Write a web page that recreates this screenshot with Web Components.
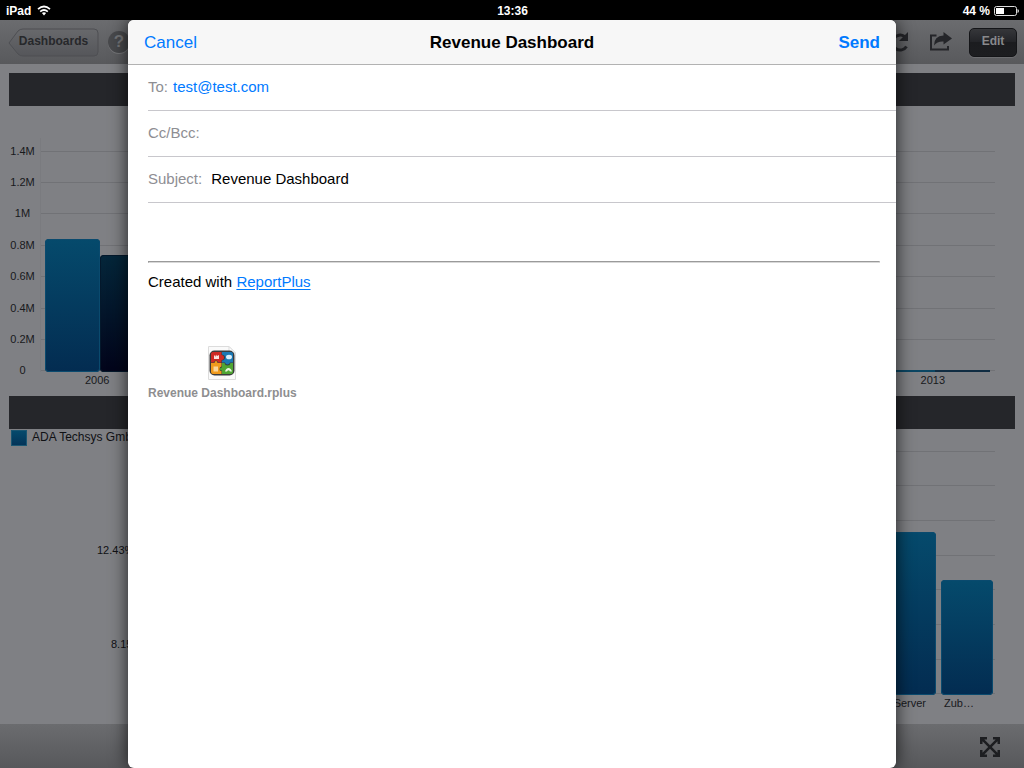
<!DOCTYPE html>
<html lang="en">
<head>
<meta charset="utf-8">
<meta name="viewport" content="width=device-width, initial-scale=1">
<title>Revenue Dashboard</title>
<style>
html, body {
    height: 100%;
    margin: 0;
}
body {
    font-family: "Liberation Sans", Arial, sans-serif;
    overflow: hidden;
}
</style>
</head>
<body>
<site-body></site-body>

<script>
class BaseElement extends HTMLElement{
    constructor(){
        super();
        this.attachShadow({mode:'open'});
    }

    connectedCallback(){
        this.render()
    }

    render(){
        this.shadowRoot.innerHTML = this.getTemplate() + this.getStyle()
    }
}

class StatusBar extends BaseElement{
    getTemplate(){
        return `
        <div class="side">
            <span>iPad</span>
            <svg width="14" height="11" viewBox="0 0 14 11" fill="none" stroke="#fff" stroke-width="1.7">
                <path d="M1 4.2Q7-1.2 13 4.2M3.2 6.6Q7 3.4 10.8 6.6"/>
                <path d="M4.9 7.9Q7 6.4 9.1 7.9L7 10.4Z" fill="#fff" stroke="none"/>
            </svg>
        </div>
        <time>13:36</time>
        <div class="side end">
            <span>44 %</span>
            <svg width="25" height="10" viewBox="0 0 25 10">
                <rect x=".5" y=".5" width="22" height="9" rx="2" fill="none" stroke="#ddd"/>
                <rect x="2" y="2" width="8" height="6" fill="#fff"/>
                <path d="M23.5 3Q25 3.5 25 5T23.5 7Z" fill="#ddd"/>
            </svg>
        </div>
        `
    }

    getStyle(){
        return `
        <style>
        :host{
            display: flex;
            align-items: center;
            height: 20px;
            padding: 1px 5px 0 6px;
            box-sizing: border-box;
            background: #000;
            color: #fff;
            font-size: 12px;
            font-weight: bold;
        }
        .side{
            display: flex;
            flex: 1;
            align-items: center;
            gap: 6px;
        }
        .end{
            justify-content: flex-end;
            gap: 4px;
        }
        </style>
        `
    }
}

class DashboardToolbar extends BaseElement{
    getTemplate(){
        return `
        <button class="back" type="button">
            <svg width="91" height="29" viewBox="0 0 91 29">
                <defs>
                    <linearGradient id="g" x2="0" y2="1">
                        <stop offset="0" stop-color="#68696c"/>
                        <stop offset="1" stop-color="#55565a"/>
                    </linearGradient>
                </defs>
                <path d="M1 15L10 3Q12 1 15 1H86Q90 1 90 5V24Q90 28 86 28H15Q12 28 10 26Z" fill="url(#g)" stroke="#4e4f53"/>
            </svg>
            <span>Dashboards</span>
        </button>
        <button class="help" type="button" aria-label="Help">?</button>
        <div class="space"></div>
        <button class="icon" type="button" aria-label="Refresh">
            <svg width="22" height="22" viewBox="0 0 22 22">
                <path d="M17.500 15.500A7.500 7.500 0 1 1 15.500 5.500" fill="none" stroke="#242529" stroke-width="3"/>
                <path d="M19 1V10H10Z" fill="#242529"/>
            </svg>
        </button>
        <button class="icon" type="button" aria-label="Share">
            <svg width="24" height="22" viewBox="0 0 24 22">
                <path d="M8.500 4.500H3V18.500H20V15" fill="none" stroke="#242529" stroke-width="2"/>
                <path d="M6 14.500Q6 5 15.500 4.500V1L24 7.500L15.500 13.500V10.500Q9.500 10 6 14.500Z" fill="#242529"/>
            </svg>
        </button>
        <button class="edit" type="button">Edit</button>
        `
    }

    getStyle(){
        return `
        <style>
        :host{
            display: flex;
            align-items: center;
            height: 44px;
            padding: 0 7px 0 8px;
            box-sizing: border-box;
            background: linear-gradient(#6b6c6f, #58595c);
        }
        button{
            padding: 0;
            border: 0;
            background: none;
            font: bold 12px "Liberation Sans", Arial, sans-serif;
            color: #27282b;
        }
        .back{
            display: grid;
            align-items: center;
        }
        .back > *{
            grid-area: 1 / 1;
        }
        .back span{
            padding-bottom: 2px;
        }
        .help{
            width: 22px;
            height: 22px;
            margin-left: 9px;
            border-radius: 50%;
            background: #48494c;
            box-shadow: 0 1px 0 #77787b;
            color: #747578;
            font-size: 17px;
            line-height: 22px;
        }
        .space{
            flex: 1;
        }
        .icon{
            display: flex;
            margin-right: 17px;
        }
        .edit{
            width: 48px;
            height: 29px;
            padding-bottom: 2px;
            border: 1px solid #141518;
            border-radius: 5px;
            background: linear-gradient(#36373a, #222327 50%, #1b1c1f 50%, #1d1e21);
            box-shadow: 0 1px 0 #6c6d70;
            color: #88898c;
        }
        </style>
        `
    }
}

class DashboardPanel extends BaseElement{
    getTemplate(){
        return `
        <header></header>
        <div class="content"><slot></slot></div>
        `
    }

    getStyle(){
        return `
        <style>
        :host{
            display: flex;
            flex-direction: column;
            min-height: 0;
        }
        header{
            height: 33px;
            background: #25262a;
        }
        .content{
            display: flex;
            flex: 1;
            min-height: 0;
        }
        </style>
        `
    }
}

// ticks: axis labels from top to bottom, empty ones draw the line only
// groups: bar heights in percent of the plot, "," inside a group, "|" between groups
class BarChart extends BaseElement{
    getTemplate(){
        const ticks = this.getAttribute('ticks').split(',')
        const groups = this.getAttribute('groups').split('|')
        const labels = this.getAttribute('labels').split('|')

        return `
        <div class="plot">
            <div class="grid">
                ${ticks.map(t => `<div class="tick"><span>${t}</span><i></i></div>`).join('')}
            </div>
            <div class="bars">
                ${groups.map(g => `<div class="group">${g ? g.split(',').map(h => `<div class="bar" style="height:${h}%"></div>`).join('') : ''}</div>`).join('')}
            </div>
        </div>
        <div class="labels">
            ${labels.map(l => `<span>${l}</span>`).join('')}
        </div>
        `
    }

    getStyle(){
        return `
        <style>
        :host{
            display: flex;
            flex: 1;
            flex-direction: column;
            min-width: 0;
            padding: 38px 20px 9px 0;
            font-size: 11px;
            line-height: 14px;
            color: #18191c;
        }
        :host([compact]){
            padding-top: 15px;
        }
        .plot{
            display: grid;
            flex: 1;
            min-height: 0;
        }
        .grid, .bars{
            grid-area: 1 / 1;
            min-height: 0;
        }
        .grid{
            display: flex;
            flex-direction: column;
            justify-content: space-between;
        }
        .tick{
            display: flex;
            align-items: center;
            gap: 4px;
            height: 14px;
        }
        .tick span{
            width: 27px;
            padding-bottom: 1px;
            text-align: center;
        }
        .tick i{
            flex: 1;
            height: 1px;
            background: #717276;
        }
        .bars{
            display: flex;
            margin: -6px 0 6px 31px;
            padding-top: 13px;
            border-left: 1px solid #7a7b7f;
        }
        .group{
            display: flex;
            flex: 1;
            align-items: flex-end;
            padding: 0 5px;
        }
        .group:first-child{
            padding-left: 4px;
        }
        .bar{
            flex: 1;
            min-height: 2px;
            box-sizing: border-box;
            border-radius: 4px;
            background: linear-gradient(#054a6c, #032c51);
            box-shadow: inset 0 0 0 1px #0a4a6e;
        }
        .bar + .bar{
            background: linear-gradient(#04263a, #02041a);
            box-shadow: inset 0 0 0 1px #04182b;
        }
        :host(:not([compact])) .group:last-child .bar{
            border-radius: 0;
            background: #0b4663;
            box-shadow: none;
        }
        :host(:not([compact])) .group:last-child .bar + .bar{
            background: #102c42;
        }
        .labels{
            display: flex;
            margin: -5px 0 0 31px;
        }
        .labels span{
            flex: 1;
            padding-right: 5px;
            text-align: center;
        }
        :host([compact]) .bars{
            justify-content: flex-end;
            gap: 5px;
            padding-right: 2px;
        }
        :host([compact]) .group{
            flex: 0 0 52px;
            padding: 0;
        }
        :host([compact]) .labels{
            justify-content: flex-end;
            gap: 18px;
            padding-right: 21px;
        }
        :host([compact]) .labels span{
            flex: none;
            padding: 0;
        }
        </style>
        `
    }
}

class PieChart extends BaseElement{
    getTemplate(){
        return `
        <div class="legend"><i></i><span>ADA Techsys GmbH</span></div>
        <div class="canvas">
            <span style="left:88px;top:96px">12.43%</span>
            <span style="left:102px;top:190px">8.15%</span>
        </div>
        `
    }

    getStyle(){
        return `
        <style>
        :host{
            display: flex;
            flex: 1;
            flex-direction: column;
            color: #101114;
        }
        .legend{
            display: flex;
            align-items: center;
            gap: 5px;
            height: 18px;
            padding-left: 2px;
            font-size: 12px;
        }
        .legend span{
            padding-bottom: 2px;
        }
        .legend i{
            width: 14px;
            height: 14px;
            border: 1px solid #1a5672;
            background: linear-gradient(#054a6c, #033459);
        }
        /* labels stand round the pie */
        .canvas{
            position: relative;
            flex: 1;
            font-size: 11px;
            line-height: 14px;
        }
        .canvas span{
            position: absolute;
        }
        </style>
        `
    }
}

class DashboardFooter extends BaseElement{
    getTemplate(){
        return `
        <button type="button" aria-label="Full screen">
            <svg width="22" height="22" viewBox="0 0 22 22">
                <path d="M1 1H8V3.500H5.300L11 9.200L16.700 3.500H14V1H21V8H18.500V5.300L12.800 11L18.500 16.700V14H21V21H14V18.500H16.700L11 12.800L5.300 18.500H8V21H1V14H3.500V16.700L9.200 11L3.500 5.300V8H1Z" fill="#1d1e21"/>
            </svg>
        </button>
        `
    }

    getStyle(){
        return `
        <style>
        :host{
            display: flex;
            align-items: center;
            justify-content: flex-end;
            height: 44px;
            padding-right: 23px;
            background: linear-gradient(#6b6c6f, #57585b);
        }
        button{
            display: flex;
            padding: 2px 0 0;
            border: 0;
            background: none;
        }
        </style>
        `
    }
}

class MailField extends BaseElement{
    getTemplate(){
        const type = this.getAttribute('type') || 'text'
        return `
        <label for="field">${this.getAttribute('label')}</label>
        <input id="field" type="${type}" value="${this.getAttribute('value') || ''}">
        `
    }

    getStyle(){
        return `
        <style>
        :host{
            display: flex;
            align-items: center;
            height: 45px;
            margin-left: 20px;
            border-bottom: 1px solid #c8c7cc;
            font-size: 15px;
        }
        label, input{
            padding: 0 0 2px;
        }
        label{
            color: #8e8e93;
        }
        input{
            flex: 1;
            min-width: 0;
            margin: 0 0 0 9px;
            border: 0;
            outline: 0;
            background: none;
            font: inherit;
            color: #000;
        }
        input[type=email]{
            margin-left: 5px;
            color: #007aff;
        }
        </style>
        `
    }
}

class MailAttachment extends BaseElement{
    getTemplate(){
        return `
        <svg width="28" height="34" viewBox="0 0 28 34">
            <path d="M.5.500H21L27.500 7V33.500H.5Z" fill="#fafafa" stroke="#dcdcdc"/>
            <path d="M21 .5V7H27.500Z" fill="#fff" stroke="#dcdcdc"/>
            <rect x="1.500" y="4.500" width="25" height="25" rx="5" fill="#3a3b3c"/>
            <path d="M3 8Q3 6 5 6H13.500V9Q16 9 16 11.500T13.500 14V16.500H10Q10 14.500 8 14.500T6 16.500H3Z" fill="#cf2a24"/>
            <path d="M14 6H23Q25 6 25 8V16.500H22Q21.500 18.500 19.500 18.500T17 16.500H14V14.500Q17 14 17 11.500T14 8.500Z" fill="#1b78b4"/>
            <path d="M3 17H6.500Q6.500 15 8 15T9.500 17H13.500V20.500Q11.500 20.500 11.500 23T13.500 25V28H5Q3 28 3 26Z" fill="#f09a1c"/>
            <path d="M14 17H16.500Q17 19.500 19.500 19.500T22.500 17H25V26Q25 28 23 28H14V24.500Q12 25 12 23T14 21.500Z" fill="#4fa533"/>
            <path d="M6 13V9.500H7.500V11L9 8.500V10L11 9V13Z" fill="#fbe3df"/>
            <ellipse cx="21" cy="11" rx="3" ry="2.300" fill="#d9edf8"/>
            <path d="M5.500 20.500H10V25.500H5.500Z" fill="#fbd69b"/>
            <path d="M17 25.500Q18 22 20.500 22T24 25.500H22Q20.500 23 19 25.500Z" fill="#ebf7e3"/>
        </svg>
        <span><slot></slot></span>
        `
    }

    getStyle(){
        return `
        <style>
        :host{
            display: inline-flex;
            flex-direction: column;
            align-items: center;
            gap: 6px;
            font-size: 12px;
            font-weight: bold;
            line-height: 14px;
            color: #8e8e90;
        }
        </style>
        `
    }
}

class MailSheet extends BaseElement{
    getTemplate(){
        return `
        <header>
            <button type="button">Cancel</button>
            <h1><slot name="title"></slot></h1>
            <button class="send" type="button">Send</button>
        </header>
        <mail-field label="To:" type="email" value="test@test.com"></mail-field>
        <mail-field label="Cc/Bcc:"></mail-field>
        <mail-field label="Subject:" value="Revenue Dashboard"></mail-field>
        <div class="message"><slot></slot></div>
        `
    }

    getStyle(){
        return `
        <style>
        :host{
            display: flex;
            flex-direction: column;
            border-radius: 6px;
            overflow: hidden;
            background: #fff;
            box-shadow: 0 0 18px rgba(0, 0, 0, .75);
            color: #000;
        }
        header{
            display: grid;
            grid-template-columns: 1fr auto 1fr;
            align-items: center;
            height: 42px;
            padding: 2px 16px 0;
            border-bottom: 1px solid #b2b2b2;
            background: #f7f7f7;
        }
        h1{
            margin: 0;
            font-size: 17px;
        }
        button{
            justify-self: start;
            padding: 0;
            border: 0;
            background: none;
            font-family: inherit;
            font-size: 17px;
            color: #007aff;
        }
        .send{
            justify-self: end;
            font-weight: bold;
        }
        .message{
            flex: 1;
            padding: 58px 16px 0 20px;
            font-size: 15px;
            line-height: 18px;
        }
        </style>
        `
    }
}

class SiteBody extends BaseElement{
    getTemplate(){
        return `
        <status-bar></status-bar>
        <div class="screen">
            <dashboard-toolbar></dashboard-toolbar>
            <main>
                <dashboard-panel>
                    <bar-chart ticks="1.4M,1.2M,1M,0.8M,0.6M,0.4M,0.2M,0" groups="60,53|||||||0,0" labels="2006|||||||2013"></bar-chart>
                </dashboard-panel>
                <dashboard-panel>
                    <pie-chart></pie-chart>
                    <bar-chart compact ticks=",,,,,,," groups="67|47" labels="Server|Zub…"></bar-chart>
                </dashboard-panel>
            </main>
            <dashboard-footer></dashboard-footer>

            <mail-sheet role="dialog">
                <span slot="title">Revenue Dashboard</span>
                <hr>
                <p>Created with <a href="#">ReportPlus</a></p>
                <mail-attachment>Revenue Dashboard.rplus</mail-attachment>
            </mail-sheet>
        </div>
        `
    }

    getStyle(){
        return `
        <style>
        :host{
            display: flex;
            flex-direction: column;
            height: 100%;
        }
        .screen{
            position: relative;
            display: flex;
            flex: 1;
            flex-direction: column;
            min-height: 0;
            overflow: hidden;
            background: #7f8084;
        }
        main{
            display: grid;
            flex: 1;
            grid-template-rows: 1fr 1fr;
            min-height: 0;
            padding: 9px 9px 5px;
        }
        /* the sheet lies over the dashboard */
        mail-sheet{
            position: absolute;
            inset: 0 12.5%;
        }
        hr{
            margin: 0;
            border: 1px solid #9a9a9a;
            border-bottom-color: #d8d8d8;
            border-right-color: #d8d8d8;
        }
        p{
            margin: 10px 0 55px;
        }
        a{
            color: #007aff;
            text-underline-offset: 2px;
        }
        </style>
        `
    }
}

customElements.define('status-bar', StatusBar);
customElements.define('dashboard-toolbar', DashboardToolbar);
customElements.define('dashboard-panel', DashboardPanel);
customElements.define('bar-chart', BarChart);
customElements.define('pie-chart', PieChart);
customElements.define('dashboard-footer', DashboardFooter);
customElements.define('mail-field', MailField);
customElements.define('mail-attachment', MailAttachment);
customElements.define('mail-sheet', MailSheet);
customElements.define('site-body', SiteBody);
</script>
</body>
</html>
